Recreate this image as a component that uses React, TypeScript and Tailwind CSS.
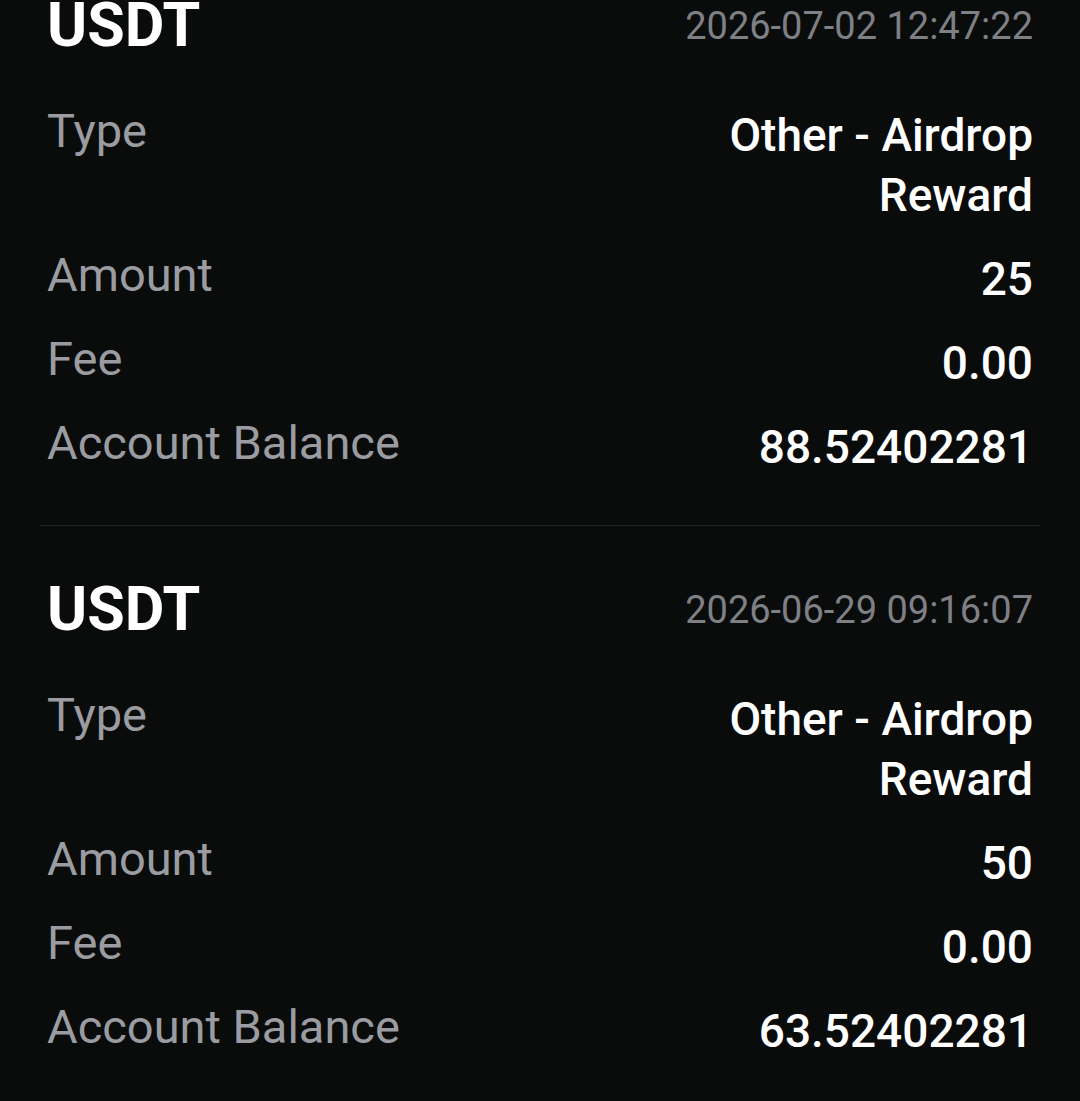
import React from 'react';

interface Txn {
  asset: string;
  time: string;
  type: string[];
  amount: string;
  fee: string;
  balance: string;
}

const txns: Txn[] = [
  {
    asset: 'USDT',
    time: '2026-07-02 12:47:22',
    type: ['Other - Airdrop', 'Reward'],
    amount: '25',
    fee: '0.00',
    balance: '88.52402281',
  },
  {
    asset: 'USDT',
    time: '2026-06-29 09:16:07',
    type: ['Other - Airdrop', 'Reward'],
    amount: '50',
    fee: '0.00',
    balance: '63.52402281',
  },
];

const Row: React.FC<{ label: string; value: React.ReactNode }> = ({ label, value }) => (
  <div className="flex items-start justify-between">
    <span className="text-[47px] leading-[52px] text-[#9b9ca1]">{label}</span>
    <span className="text-right text-[46px] leading-[60px] font-medium text-white">{value}</span>
  </div>
);

const TxnCard: React.FC<{ txn: Txn; first?: boolean }> = ({ txn, first }) => (
  <div className={first ? '-mt-[5px] px-2 pb-[48px]' : 'px-2 pt-[53px] pb-[48px]'}>
    {/* Header */}
    <div className="flex h-[60px] items-start justify-between">
      <span className="text-[61px] leading-[60px] font-bold text-white">{txn.asset}</span>
      <span className="mt-[12px] text-[38px] leading-[38px] text-[#7f8085]">{txn.time}</span>
    </div>

    {/* Details */}
    <div className="mt-[50px] flex flex-col gap-6">
      <Row
        label="Type"
        value={txn.type.map((l) => (
          <div key={l}>{l}</div>
        ))}
      />
      <Row label="Amount" value={txn.amount} />
      <Row label="Fee" value={txn.fee} />
      <Row label="Account Balance" value={txn.balance} />
    </div>
  </div>
);

export default function App() {
  return (
    <div className="min-h-screen overflow-hidden bg-[#0a0b0b] px-[39px] font-['Roboto',sans-serif]">
      {txns.map((t, i) => (
        <div key={i} className={i > 0 ? 'border-t border-[#1f2020]' : ''}>
          <TxnCard txn={t} first={i === 0} />
        </div>
      ))}
    </div>
  );
}
